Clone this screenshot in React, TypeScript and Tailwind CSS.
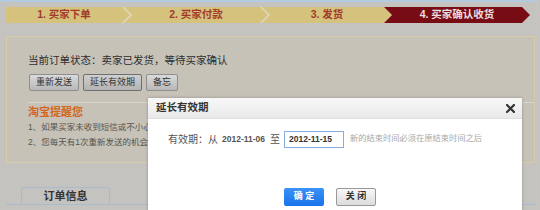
const font = "font-['Liberation_Sans','Noto_Sans_CJK_SC',sans-serif]";

function ActionButton({ label, pressed }: { label: string; pressed?: boolean }) {
  return (
    <button
      className={
        pressed
          ? "flex h-[17px] items-center justify-center rounded-[2px] border border-[#6f6f6f] bg-linear-to-b from-[#cfcfcf] to-[#b3b3b3] px-[6px] text-[9px] text-[#333]"
          : "flex h-[17px] items-center justify-center rounded-[2px] border border-[#8e8e8e] bg-linear-to-b from-[#dadada] to-[#b8b8b8] px-[6px] text-[9px] text-[#333]"
      }
    >
      {label}
    </button>
  );
}

export default function App() {
  return (
    <div className={`relative h-[210px] w-[540px] overflow-hidden bg-[#c4c3c0] ${font}`}>
      <div className="h-[210px] w-[538px] border-t-2 border-r border-[#b3cadf]">
        {/* steps */}
        <div className="ml-[6px] mt-[5px] flex h-[16px]">
          <div className="flex bg-[#e0dac4]">
            <div className="flex w-[124px] items-center justify-center bg-[#d5c27c] pr-[8px] text-[10.5px] font-bold text-[#a23a2c] [clip-path:polygon(0_0,calc(100%_-_8px)_0,100%_50%,calc(100%_-_8px)_100%,0_100%)]">
              1. 买家下单
            </div>
            <div className="-ml-[6px] flex w-[144px] items-center justify-center bg-[#d5c27c] px-[8px] text-[10.5px] font-bold text-[#a23a2c] [clip-path:polygon(0_0,calc(100%_-_8px)_0,100%_50%,calc(100%_-_8px)_100%,0_100%,8px_50%)]">
              2. 买家付款
            </div>
            <div className="-ml-[6px] flex w-[130px] items-center justify-center bg-[#d5c27c] px-[8px] text-[10.5px] font-bold text-[#a23a2c] [clip-path:polygon(0_0,calc(100%_-_8px)_0,100%_50%,calc(100%_-_8px)_100%,0_100%,8px_50%)]">
              3. 发货
            </div>
          </div>
          <div className="-ml-[8px] flex w-[146px] items-center justify-center bg-[#780c15] px-[8px] text-[10.5px] font-bold text-[#ebdede] [clip-path:polygon(0_0,calc(100%_-_8px)_0,100%_50%,calc(100%_-_8px)_100%,0_100%,8px_50%)]">
            4. 买家确认收货
          </div>
        </div>

        {/* status box */}
        <div className="ml-[6px] mt-[13px] w-[529px] border border-[#d6cca7] bg-[#c7c2b8] pb-[12px] pt-[16px]">
          <div className="pl-[21px] text-[10.5px] leading-[14px] text-[#2e2e2e]">
            当前订单状态：卖家已发货，等待买家确认
          </div>
          <div className="mt-[7px] flex gap-[4px] pl-[22px]">
            <ActionButton label="重新发送" />
            <ActionButton label="延长有效期" pressed />
            <ActionButton label="备忘" />
          </div>
          <div className="ml-[21px] mt-[11px] h-px bg-[#d8d5cd]" />
          <div className="mt-[2px] pl-[21px]">
            <div className="text-[11px] font-bold leading-[14px] text-[#d2661f]">淘宝提醒您</div>
            <div className="mt-px text-[8.5px] leading-[15px] text-[#57554f]">1、如果买家未收到短信或不小心</div>
            <div className="text-[8.5px] leading-[15px] text-[#57554f]">2、您每天有1次重新发送的机会，</div>
          </div>
        </div>

        {/* tabs */}
        <div className="ml-[6px] mt-[24px] w-[529px] border-b border-[#a9bacd]">
          <div className="ml-[15px] flex h-[17px] w-[89px] items-center justify-center rounded-t-[3px] border border-b-0 border-[#a9bacd] text-[11px] font-bold text-[#333]">
            订单信息
          </div>
        </div>
      </div>

      {/* dialog */}
      <div className="absolute left-[148px] top-[98px] h-[130px] w-[374px] bg-white shadow-[0_0_3px_rgba(0,0,0,0.25)]">
        <div className="flex h-[21px] items-center justify-between border-b border-[#dedede] bg-linear-to-b from-[#f8f8f8] to-[#e9e9e9] pl-[8px] pr-[7px]">
          <span className="text-[10.5px] font-bold text-[#333]">延长有效期</span>
          <svg width="9" height="9" viewBox="0 0 9 9">
            <path d="M1 1 L8 8 M8 1 L1 8" stroke="#333" strokeWidth="2.2" strokeLinecap="square" />
          </svg>
        </div>
        <div className="mt-[12px] flex h-[17px] items-center pl-[20px] leading-none">
          <span className="text-[10px] text-[#555]">有效期：从</span>
          <span className="ml-[4px] text-[8.5px] font-bold text-[#555]">2012-11-06</span>
          <span className="ml-[5px] text-[10px] text-[#555]">至</span>
          <div className="ml-[4px] flex h-[17px] w-[60px] items-center border border-[#86aee3] pl-[4px] text-[8.5px] font-bold text-[#333]">
            2012-11-15
          </div>
          <span className="ml-[6px] text-[8.25px] text-[#a8a8a8]">新的结束时间必须在原结束时间之后</span>
        </div>
        <div className="mt-[40px] flex gap-[12px] pl-[136px]">
          <button className="flex h-[18px] w-[40px] items-center justify-center rounded-[2px] bg-linear-to-b from-[#3b92f7] to-[#1873ea] text-[9px] font-bold text-white">
            确 定
          </button>
          <button className="flex h-[18px] w-[40px] items-center justify-center rounded-[2px] border border-[#999] bg-linear-to-b from-[#f7f7f7] to-[#dcdcdc] text-[9px] font-bold text-[#333]">
            关 闭
          </button>
        </div>
      </div>
    </div>
  );
}
